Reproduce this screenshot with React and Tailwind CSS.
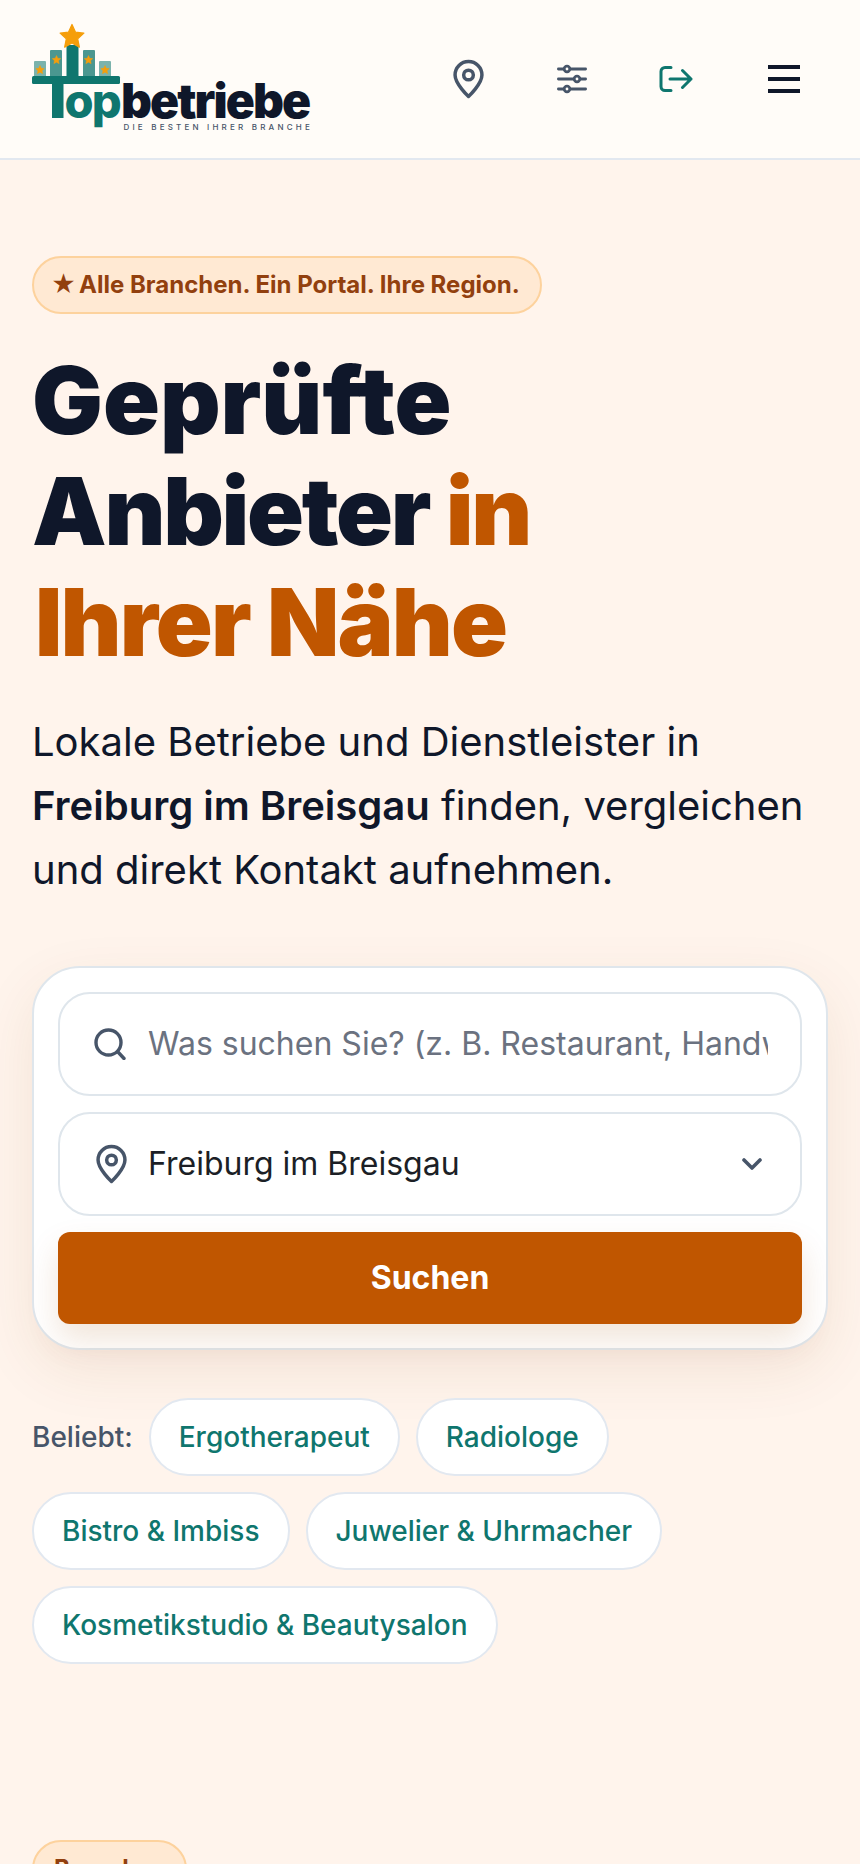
import React from "react";

const F = { fontFamily: "Inter, sans-serif" };

function Star({ cx, cy, r, fill = "#f59e0b" }) {
  const pts = [];
  for (let i = 0; i < 10; i++) {
    const a = -Math.PI / 2 + (i * Math.PI) / 5;
    const rr = i % 2 === 0 ? r : r * 0.48;
    pts.push(`${cx + rr * Math.cos(a)},${cy + rr * Math.sin(a)}`);
  }
  return <polygon points={pts.join(" ")} fill={fill} stroke={fill} strokeWidth={r / 10} strokeLinejoin="round" />;
}

function Logo() {
  return (
    <svg width="290" height="112" viewBox="0 0 290 112" className="block shrink-0">
      <g transform="translate(-32 -20)">
        <rect x="34" y="58" width="12" height="16" rx="1" fill="#0f766e" opacity="0.55" />
        <rect x="50" y="47" width="12" height="27" rx="1" fill="#0f766e" opacity="0.75" />
        <rect x="66.5" y="42" width="12" height="32" fill="#0f766e" />
        <rect x="83" y="47" width="12" height="27" rx="1" fill="#0f766e" opacity="0.75" />
        <rect x="99" y="58" width="12" height="16" rx="1" fill="#0f766e" opacity="0.55" />
        <Star cx={72} cy={34} r={12.5} />
        <Star cx={56.5} cy={57} r={4.5} />
        <Star cx={88.5} cy={57} r={4.5} />
        <Star cx={40} cy={67} r={4.5} />
        <Star cx={105} cy={67} r={4.5} />
        <rect x="32" y="73" width="88" height="8" rx="1.5" fill="#0f766e" />
        <rect x="52" y="81" width="11.5" height="34" fill="#0f766e" />
        <text x="64.5" y="115" fontFamily="Inter, sans-serif" fontWeight="800" fontSize="47" letterSpacing="-1.8" fill="#0f766e">op</text>
        <text x="121" y="115" fontFamily="Inter, sans-serif" fontWeight="900" fontSize="48" letterSpacing="-1.9" fill="#0f172a">betriebe</text>
        <text x="123.5" y="127" fontFamily="Inter, sans-serif" fontWeight="500" fontSize="8" letterSpacing="3.2" fill="#475569">DIE BESTEN IHRER BRANCHE</text>
      </g>
    </svg>
  );
}

function Pin({ className }) {
  return (
    <svg viewBox="0 0 24 24" fill="none" stroke="currentColor" strokeWidth="1.95" strokeLinecap="round" strokeLinejoin="round" className={className}>
      <path d="M12 21.5s-7.5-7-7.5-12a7.5 7.5 0 0 1 15 0c0 5-7.5 12-7.5 12Z" />
      <circle cx="12" cy="9.5" r="2.7" />
    </svg>
  );
}

function Chip({ children }) {
  return (
    <span className="inline-flex h-[78px] items-center rounded-full border-2 border-[#e2e8f0] bg-white px-[28px] text-[28px] font-medium text-[#0f766e]">
      {children}
    </span>
  );
}

export default function App() {
  return (
    <div className="h-[1864px] w-[860px] overflow-hidden bg-[#fff4ec]" style={F}>
      <header className="flex h-[160px] items-center justify-between border-b-2 border-[#e2e8f0] bg-[#fffcf8] pl-[32px] pr-[60px]">
        <Logo />
        <nav className="flex items-center">
          <div className="flex w-[104px] justify-center">
            <Pin className="h-[43px] w-[43px] text-[#475569]" />
          </div>
          <div className="flex w-[104px] justify-center">
            <svg viewBox="0 0 30 30" fill="none" stroke="#475569" strokeWidth="2.8" strokeLinecap="round" className="h-[30px] w-[30px]">
              <path d="M1.4 5h27.2M1.4 15h27.2M1.4 25h27.2" />
              <circle cx="10" cy="5" r="2.8" fill="#fffcf8" />
              <circle cx="20" cy="15" r="2.8" fill="#fffcf8" />
              <circle cx="10" cy="25" r="2.8" fill="#fffcf8" />
            </svg>
          </div>
          <div className="flex w-[104px] justify-center">
            <svg viewBox="0 0 34 26" fill="none" stroke="#0f766e" strokeWidth="3" strokeLinecap="round" strokeLinejoin="round" className="h-[26px] w-[34px]">
              <path d="M12 1.5H6a4 4 0 0 0-4 4v15a4 4 0 0 0 4 4h6M11 13h21M23.5 4.5l8.5 8.5-8.5 8.5" />
            </svg>
          </div>
          <div className="ml-[40px] flex w-[32px] flex-col gap-[8px]">
            <span className="h-[4px] bg-[#0f172a]" />
            <span className="h-[4px] bg-[#0f172a]" />
            <span className="h-[4px] bg-[#0f172a]" />
          </div>
        </nav>
      </header>

      <main className="px-[32px] pt-[96px]">
        <div className="inline-flex h-[58px] items-center rounded-full border-2 border-[#fdd29d] bg-[#ffe9d3] pl-[17px] pr-[20px] text-[24px] font-bold text-[#92400e]">
          <span className="mr-[3px]">★</span>Alle Branchen. Ein Portal. Ihre Region.
        </div>

        <h1 className="mt-[31px] text-[94px] font-black leading-[111px] text-[#0f172a]">
          <span className="block tracking-[0px]">Geprüfte</span>
          <span className="block tracking-[-2.3px]">
            Anbieter <span className="text-[#c05600]">in</span>
          </span>
          <span className="ml-[3px] block tracking-[-1.8px] text-[#c05600]">Ihrer Nähe</span>
        </h1>

        <p className="mt-[32px] text-[40px] leading-[64px] text-[#0f172a]">
          Lokale Betriebe und Dienstleister in
          <br />
          <strong className="font-semibold">Freiburg im Breisgau</strong> finden, vergleichen
          <br />
          und direkt Kontakt aufnehmen.
        </p>

        <div className="mt-[64px] flex w-[796px] flex-col rounded-[48px] border-2 border-[#dfe6ec] bg-white p-[24px] shadow-[0_20px_60px_rgba(120,70,20,0.09)]">
          <div className="flex h-[104px] items-center rounded-[32px] border-2 border-[#dfe6ec] pl-[34px] pr-[32px]">
            <svg viewBox="0 0 32 32" fill="none" stroke="#475569" strokeWidth="3.4" strokeLinecap="round" className="h-[32px] w-[32px] shrink-0">
              <circle cx="14.5" cy="14.5" r="12.5" />
              <path d="m24 24 6 6.5" />
            </svg>
            <span className="ml-[22px] overflow-hidden whitespace-nowrap text-[32px] text-[#6b7280]">
              Was suchen Sie? (z. B. Restaurant, Handwerker, Arzt)
            </span>
          </div>
          <div className="mt-[16px] flex h-[104px] items-center rounded-[32px] border-2 border-[#dfe6ec] pl-[30px] pr-[38px]">
            <Pin className="h-[43px] w-[43px] shrink-0 text-[#475569]" />
            <span className="ml-[15px] flex-1 text-[32px] text-[#1c1f26]">Freiburg im Breisgau</span>
            <svg viewBox="0 0 20 14" fill="none" stroke="#475569" strokeWidth="3.6" strokeLinecap="round" strokeLinejoin="round" className="h-[14px] w-[20px]">
              <path d="m2 3 8 8 8-8" />
            </svg>
          </div>
          <button className="mt-[16px] h-[92px] rounded-[12px] bg-[#c05600] text-[32px] font-bold text-white shadow-[0_16px_32px_rgba(160,80,10,0.15)]">
            Suchen
          </button>
        </div>

        <div className="mt-[48px] flex flex-wrap items-center gap-x-[16px] gap-y-[16px]">
          <span className="text-[28px] font-medium text-[#475569]">Beliebt:</span>
          <Chip>Ergotherapeut</Chip>
          <Chip>Radiologe</Chip>
          <Chip>Bistro &amp; Imbiss</Chip>
          <Chip>Juwelier &amp; Uhrmacher</Chip>
          <Chip>Kosmetikstudio &amp; Beautysalon</Chip>
        </div>

        <div className="mt-[176px] inline-flex h-[58px] items-center rounded-full border-2 border-[#fdd29d] bg-[#ffe9d3] pl-[20px] pr-[18px] text-[24px] font-bold text-[#92400e]">
          Branchen
        </div>
      </main>
    </div>
  );
}
